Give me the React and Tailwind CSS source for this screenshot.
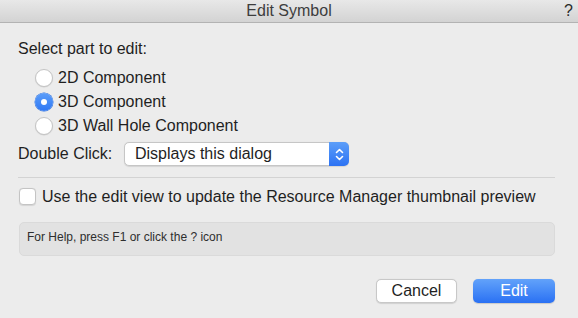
import { useState } from "react";

const parts = ["2D Component", "3D Component", "3D Wall Hole Component"];

function Radio({ checked }) {
  return checked ? (
    <span className="flex h-[18px] w-[18px] items-center justify-center rounded-full bg-gradient-to-b from-[#5b9df9] to-[#2f78f4] shadow-[0_0_0_0.5px_#2a6fe0]">
      <span className="h-[6px] w-[6px] rounded-full bg-white" />
    </span>
  ) : (
    <span className="h-[18px] w-[18px] rounded-full border border-[#c4c4c4] bg-white shadow-[0_0.5px_1px_rgba(0,0,0,0.12)]" />
  );
}

export default function App() {
  const [part, setPart] = useState(1);
  const [useView, setUseView] = useState(false);

  return (
    <div className="flex h-[318px] w-[578px] flex-col bg-[#ececec] font-['Liberation_Sans',Arial,sans-serif] text-[16px] text-[#1f1f1f]">
      {/* Title bar */}
      <div className="grid h-[23px] grid-cols-[1fr_auto_1fr] items-center border-b border-[#b3b3b3] bg-gradient-to-b from-[#e8e8e8] to-[#d3d3d3]">
        <span />
        <span className="text-[16px] leading-[20px] text-[#3d3d3d]">Edit Symbol</span>
        <span className="justify-self-end pr-[5px] text-[16px] leading-[20px] text-[#2a2a2a]">?</span>
      </div>

      <div className="flex flex-col pl-[18px] pr-[23px]">
        <div className="mt-[16px] h-[20px] leading-[20px]">Select part to edit:</div>

        {/* Part radios */}
        <div className="mt-[7px] flex flex-col pl-[17px]">
          {parts.map((p, i) => (
            <button
              key={p}
              onClick={() => setPart(i)}
              className="flex h-[24px] items-center gap-[5px] text-left leading-[24px]"
            >
              <Radio checked={part === i} />
              <span>{p}</span>
            </button>
          ))}
        </div>

        {/* Double click */}
        <div className="mt-[4px] flex h-[24px] items-center">
          <span className="w-[106px] leading-[24px]">Double Click:</span>
          <div className="flex h-[24px] w-[225px] items-stretch rounded-[5px] border border-[#c6c6c6] bg-white shadow-[0_0.5px_1px_rgba(0,0,0,0.1)]">
            <span className="flex-1 pl-[10px] leading-[22px]">Displays this dialog</span>
            <span className="-my-px -mr-px flex w-[20px] items-center justify-center rounded-r-[5px] bg-gradient-to-b from-[#5c9ef9] to-[#2c72f3]">
              <svg width="9" height="15" viewBox="0 0 9 15" fill="none" stroke="white" strokeWidth="1.6" strokeLinecap="round" strokeLinejoin="round">
                <path d="M1.5 5.5 4.5 2.5 7.5 5.5" />
                <path d="M1.5 9.5 4.5 12.5 7.5 9.5" />
              </svg>
            </span>
          </div>
        </div>

        <div className="mt-[11px] h-px bg-[#d3d3d3]" />

        {/* Thumbnail checkbox */}
        <button
          onClick={() => setUseView(!useView)}
          className="mt-[10px] flex h-[17px] items-center gap-[6px] pl-px text-left"
        >
          <span className="flex h-[17px] w-[17px] items-center justify-center rounded-[4px] border border-[#c4c4c4] bg-white shadow-[0_0.5px_1px_rgba(0,0,0,0.1)]">
            {useView && <span className="text-[12px] leading-none">✓</span>}
          </span>
          <span className="leading-[20px]">
            Use the edit view to update the Resource Manager thumbnail preview
          </span>
        </button>

        {/* Help box */}
        <div className="mt-[17px] ml-px h-[34px] rounded-[5px] border border-[#dadada] bg-[#e2e2e2] pl-[7px] pt-[6px] text-[12px] leading-[16px] text-[#2e2e2e]">
          For Help, press F1 or click the ? icon
        </div>

        {/* Buttons */}
        <div className="mt-[23px] flex justify-end gap-[16px]">
          <button className="h-[24px] w-[81px] rounded-[5px] border border-[#c8c8c8] bg-white leading-[22px] shadow-[0_0.5px_1px_rgba(0,0,0,0.12)]">
            Cancel
          </button>
          <button className="h-[24px] w-[82px] rounded-[5px] bg-gradient-to-b from-[#62a2fa] to-[#2a70f3] leading-[24px] text-white shadow-[0_0.5px_1px_rgba(0,0,0,0.15)]">
            Edit
          </button>
        </div>
      </div>
    </div>
  );
}
